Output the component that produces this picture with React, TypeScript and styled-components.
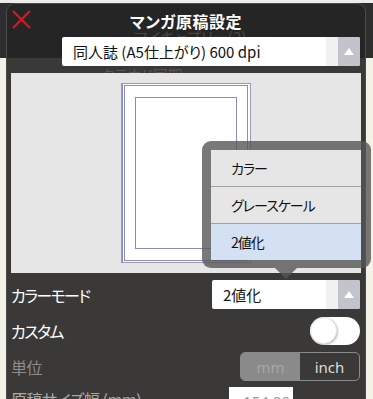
import React from 'react';
import styled, { createGlobalStyle } from 'styled-components';

const GlobalStyle = createGlobalStyle`
  html, body {
    margin: 0;
    padding: 0;
  }
  body {
    width: 373px;
    height: 399px;
    overflow: hidden;
    font-family: 'Noto Sans CJK JP', 'Noto Sans', sans-serif;
    font-feature-settings: 'palt';
    background: linear-gradient(#ececec 0 3px, #2e2e2e 3px 58px, #f3f2e7 58px);
  }
`;

const colorModes = ['カラー', 'グレースケール', '2値化'];

const App: React.FC = () => {
  return (
    <>
      <GlobalStyle />
      <Dialog>
        <Ghost $left={127} $top={23} $color="#474747">
          マイキャプリー(2)
        </Ghost>
        <Ghost $left={94} $top={61} $color="#575655">
          クラウド同期
        </Ghost>
        <TitleBar>
          <CloseButton>
            <svg width="19" height="19" viewBox="0 0 19 19">
              <path d="M1 1 L18 18 M18 1 L1 18" stroke="#e3141b" strokeWidth="2.2" />
            </svg>
          </CloseButton>
          <Title>マンガ原稿設定</Title>
        </TitleBar>
        <PresetRow>
          <Select $width={298}>
            <SelectText>同人誌 (A5仕上がり) 600 dpi</SelectText>
            <ArrowButton />
          </Select>
        </PresetRow>
        <Preview>
          <Paper>
            <Bleed>
              <Trim />
            </Bleed>
          </Paper>
        </Preview>
        <Row>
          <Label $tight>カラーモード</Label>
          <Anchor>
            <Select $width={148}>
              <SelectText>2値化</SelectText>
              <ArrowButton />
            </Select>
            <Popup>
              <Menu>
                {colorModes.map((mode, key) => (
                  <MenuItem key={key} $active={mode === '2値化'}>
                    {mode}
                  </MenuItem>
                ))}
              </Menu>
              <Pointer />
            </Popup>
          </Anchor>
        </Row>
        <Row>
          <Label $tight>カスタム</Label>
          <Toggle>
            <Knob />
          </Toggle>
        </Row>
        <Row>
          <Label $muted>単位</Label>
          <Segmented>
            <Segment $active>mm</Segment>
            <Segment>inch</Segment>
          </Segmented>
        </Row>
        <Row $last>
          <Label $dim>原稿サイズ幅 (mm)</Label>
          <NumberInput>154.00</NumberInput>
        </Row>
      </Dialog>
    </>
  );
};

export default App;

const Dialog = styled.div`
  position: relative;
  margin: 3px 0 0 6px;
  width: 360px;
  height: 396px;
  box-sizing: border-box;
  border-radius: 9px 9px 0 0;
  border: 1px solid #4b4b4b;
  border-bottom: none;
  background: linear-gradient(#252525 0 54px, #3a3937 54px);
`;

const Ghost = styled.div<{ $left: number; $top: number; $color: string }>`
  position: absolute;
  left: ${p => p.$left}px;
  top: ${p => p.$top}px;
  color: ${p => p.$color};
  font-size: 15px;
  line-height: 20px;
  z-index: 0;
`;

const TitleBar = styled.div`
  position: relative;
  z-index: 1;
  height: 33px;
  display: flex;
  align-items: center;
  justify-content: center;
`;

const CloseButton = styled.div`
  position: absolute;
  left: 5px;
  top: 6px;
  width: 19px;
  height: 19px;
  svg {
    display: block;
  }
`;

const Title = styled.div`
  color: #ffffff;
  font-size: 16px;
  font-weight: 700;
  letter-spacing: 0.5px;
`;

const PresetRow = styled.div`
  position: relative;
  z-index: 1;
  display: flex;
  justify-content: flex-end;
  padding-right: 5px;
`;

const Select = styled.div<{ $width: number }>`
  width: ${p => p.$width}px;
  height: 29px;
  box-sizing: border-box;
  display: flex;
  align-items: stretch;
  background: linear-gradient(90deg, #ffffff 0 calc(100% - 34px), #f1f1f1 calc(100% - 34px));
  border-radius: 2px;
  overflow: hidden;
`;

const SelectText = styled.div`
  flex: 1;
  display: flex;
  align-items: center;
  padding-left: 11px;
  font-size: 15px;
  color: #111;
  white-space: nowrap;
`;

const ArrowButton = styled.div`
  width: 22px;
  background: #c2c3cb;
  display: flex;
  align-items: center;
  justify-content: center;
  &::after {
    content: '';
    border-left: 5px solid transparent;
    border-right: 5px solid transparent;
    border-bottom: 7px solid #ffffff;
    margin-top: -1px;
  }
`;

const Preview = styled.div`
  position: relative;
  z-index: 1;
  margin: 7px 4px 0;
  height: 200px;
  background: #e6e6e6;
  display: flex;
  justify-content: center;
  padding-top: 10px;
  box-sizing: border-box;
`;

const Paper = styled.div`
  width: 130px;
  height: 180px;
  box-sizing: border-box;
  border: 1px solid #9a9ab4;
  box-shadow: inset 1px 0 0 #8c8cc4;
  background: #ffffff;
  padding: 1px 2px 1px 2px;
`;

const Bleed = styled.div`
  height: 100%;
  box-sizing: border-box;
  border: 1px solid #8c8cc4;
  padding: 11px 10px 11px 10px;
`;

const Trim = styled.div`
  height: 100%;
  box-sizing: border-box;
  border: 1px solid #8a8ac2;
`;

const Row = styled.div<{ $last?: boolean }>`
  position: relative;
  z-index: 2;
  display: flex;
  align-items: ${p => (p.$last ? 'flex-start' : 'center')};
  justify-content: space-between;
  padding: 0 5px 0 4px;
  margin-top: ${p => (p.$last ? 6 : 7)}px;
  height: 29px;
`;

const Label = styled.div<{ $muted?: boolean; $dim?: boolean; $tight?: boolean }>`
  font-size: 16px;
  line-height: 24px;
  letter-spacing: ${p => (p.$tight ? '-1.6px' : '-0.5px')};
  color: ${p => (p.$muted ? '#8d8d8d' : p.$dim ? '#a9a9a9' : '#ffffff')};
  white-space: nowrap;
`;

const Anchor = styled.div`
  position: relative;
`;

const Popup = styled.div`
  position: absolute;
  right: -11px;
  bottom: calc(100% + 12px);
  width: 169px;
  box-sizing: border-box;
  padding: 9px 10px 8px 9px;
  background: rgba(86, 86, 86, 0.8);
  border-radius: 9px;
`;

const Menu = styled.div`
  background: #e6e6e6;
  display: flex;
  flex-direction: column;
`;

const MenuItem = styled.div<{ $active?: boolean }>`
  height: 36px;
  display: flex;
  align-items: center;
  padding-left: 20px;
  font-size: 14px;
  letter-spacing: -1px;
  color: #111;
  background: ${p => (p.$active ? '#d4e1f3' : '#e6e6e6')};
  & + & {
    border-top: 1px solid #a2a2a2;
  }
`;

const Pointer = styled.div`
  position: absolute;
  left: 73px;
  top: 100%;
  width: 0;
  height: 0;
  border-left: 11px solid transparent;
  border-right: 11px solid transparent;
  border-top: 11px solid rgba(86, 86, 86, 0.8);
`;

const Toggle = styled.div`
  width: 50px;
  height: 28px;
  border-radius: 14px;
  background: #ffffff;
  display: flex;
  align-items: center;
`;

const Knob = styled.div`
  width: 27px;
  height: 27px;
  box-sizing: border-box;
  border-radius: 50%;
  background: #ffffff;
  box-shadow: 1px 1px 2px rgba(0, 0, 0, 0.25);
  border: 1px solid #e4e4e4;
`;

const Segmented = styled.div`
  width: 120px;
  height: 29px;
  box-sizing: border-box;
  border: 1px solid #8a8a8a;
  border-radius: 5px;
  overflow: hidden;
  display: flex;
`;

const Segment = styled.div<{ $active?: boolean }>`
  flex: 1;
  display: flex;
  align-items: center;
  justify-content: center;
  font-family: 'Noto Sans', sans-serif;
  font-size: 15px;
  background: ${p => (p.$active ? '#8a8a8a' : 'transparent')};
  color: ${p => (p.$active ? '#a7a7a7' : '#dcdcdc')};
`;

const NumberInput = styled.div`
  margin-right: 67px;
  width: 64px;
  height: 29px;
  box-sizing: border-box;
  background: #ffffff;
  color: #9a9a9a;
  font-family: 'Noto Sans', sans-serif;
  font-size: 15px;
  text-align: right;
  padding: 4px 3px 0 0;
  line-height: 20px;
`;
